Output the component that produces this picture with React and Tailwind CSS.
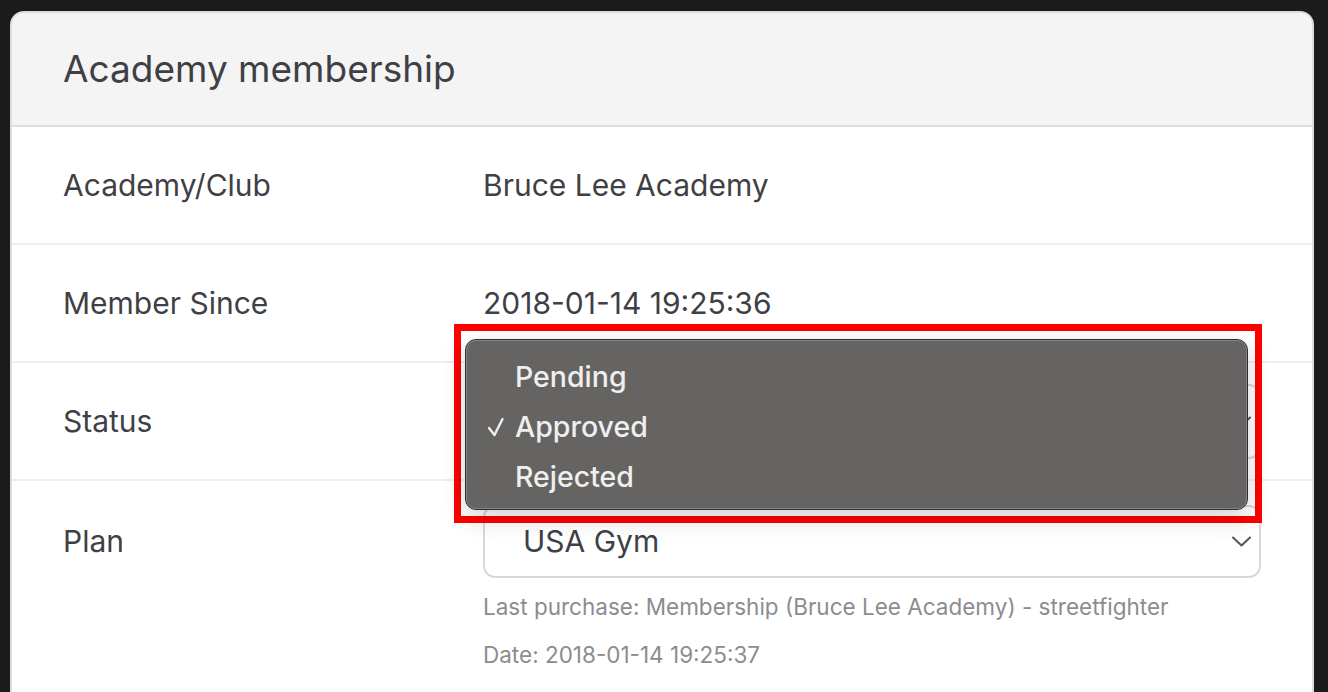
function Chevron() {
  return (
    <svg width="19" height="11" viewBox="0 0 19 11" fill="none" className="shrink-0">
      <polyline points="1,1.5 9.5,9.5 18,1.5" stroke="#555558" strokeWidth="2" strokeLinecap="round" strokeLinejoin="round" />
    </svg>
  );
}

function Row({ label, children }) {
  return (
    <div className="flex h-[118px] items-center border-b-2 border-[#efefef] px-[51px]">
      <div className="w-[420px] shrink-0 text-[30px] text-[#3f3f46]">{label}</div>
      <div className="flex flex-1 items-center text-[30px] text-[#3f3f46]">{children}</div>
    </div>
  );
}

export default function App() {
  return (
    <div className="relative h-[692px] overflow-hidden bg-[#1b1b1b] pl-[10px] pr-[14px] pt-[11px] font-[Inter,'Noto_Sans',sans-serif]">
      <div className="h-[720px] overflow-hidden rounded-t-[14px] border-2 border-[#dcdcdc] bg-white">
        <div className="flex h-[114px] items-center border-b-2 border-[#dedede] bg-[#f4f4f4] pl-[51px]">
          <h1 className="text-[37px] text-[#3f3f46]">Academy membership</h1>
        </div>
        <Row label="Academy/Club">Bruce Lee Academy</Row>
        <Row label="Member Since">2018-01-14 19:25:36</Row>
        <Row label="Status">
          <div className="flex h-[75px] flex-1 items-center justify-end rounded-[12px] border-2 border-[#d8d8db] bg-white pr-[8px]">
            <Chevron />
          </div>
        </Row>
        <div className="flex px-[51px] pt-[24px]">
          <div className="flex h-[73px] w-[420px] shrink-0 items-center text-[30px] text-[#3f3f46]">Plan</div>
          <div className="flex flex-1 flex-col">
            <div className="flex h-[73px] items-center justify-between rounded-[12px] border-2 border-[#d8d8db] bg-white pl-[38px] pr-[8px]">
              <span className="text-[30px] text-[#3f3f46]">USA Gym</span>
              <Chevron />
            </div>
            <div className="mt-[15px] text-[22.5px] leading-[28px] text-[#8c8c90]">
              Last purchase: Membership (Bruce Lee Academy) - streetfighter
            </div>
            <div className="mt-[20px] text-[22.5px] leading-[28px] text-[#8c8c90]">
              Date: 2018-01-14 19:25:37
            </div>
          </div>
        </div>
      </div>

      {/* highlight box */}
      <div className="absolute left-[454px] top-[324px] h-[199px] w-[808px] border-[7px] border-[#ff0000]" />

      {/* native popup menu */}
      <div className="absolute left-[465px] top-[339px] h-[171px] w-[783px] rounded-[11px] border border-[#2f2f2f] bg-[#656462] shadow-[0_8px_24px_rgba(0,0,0,0.18)]">
        <div className="h-full w-full rounded-[10px] border border-[#858482] pt-[11px]">
          <div className="flex h-[50px] items-center pl-[48px] text-[28.5px] font-medium text-[#efefef]">Pending</div>
          <div className="relative flex h-[50px] items-center pl-[48px] text-[28.5px] font-medium text-[#efefef]">
            <svg width="18" height="20" viewBox="0 0 18 20" fill="none" className="absolute left-[20px] top-[15px]">
              <polyline points="2,11 7.5,18 15.5,2" stroke="#efefef" strokeWidth="2.4" strokeLinecap="round" strokeLinejoin="round" />
            </svg>
            Approved
          </div>
          <div className="flex h-[50px] items-center pl-[48px] text-[28.5px] font-medium text-[#efefef]">Rejected</div>
        </div>
      </div>
    </div>
  );
}
